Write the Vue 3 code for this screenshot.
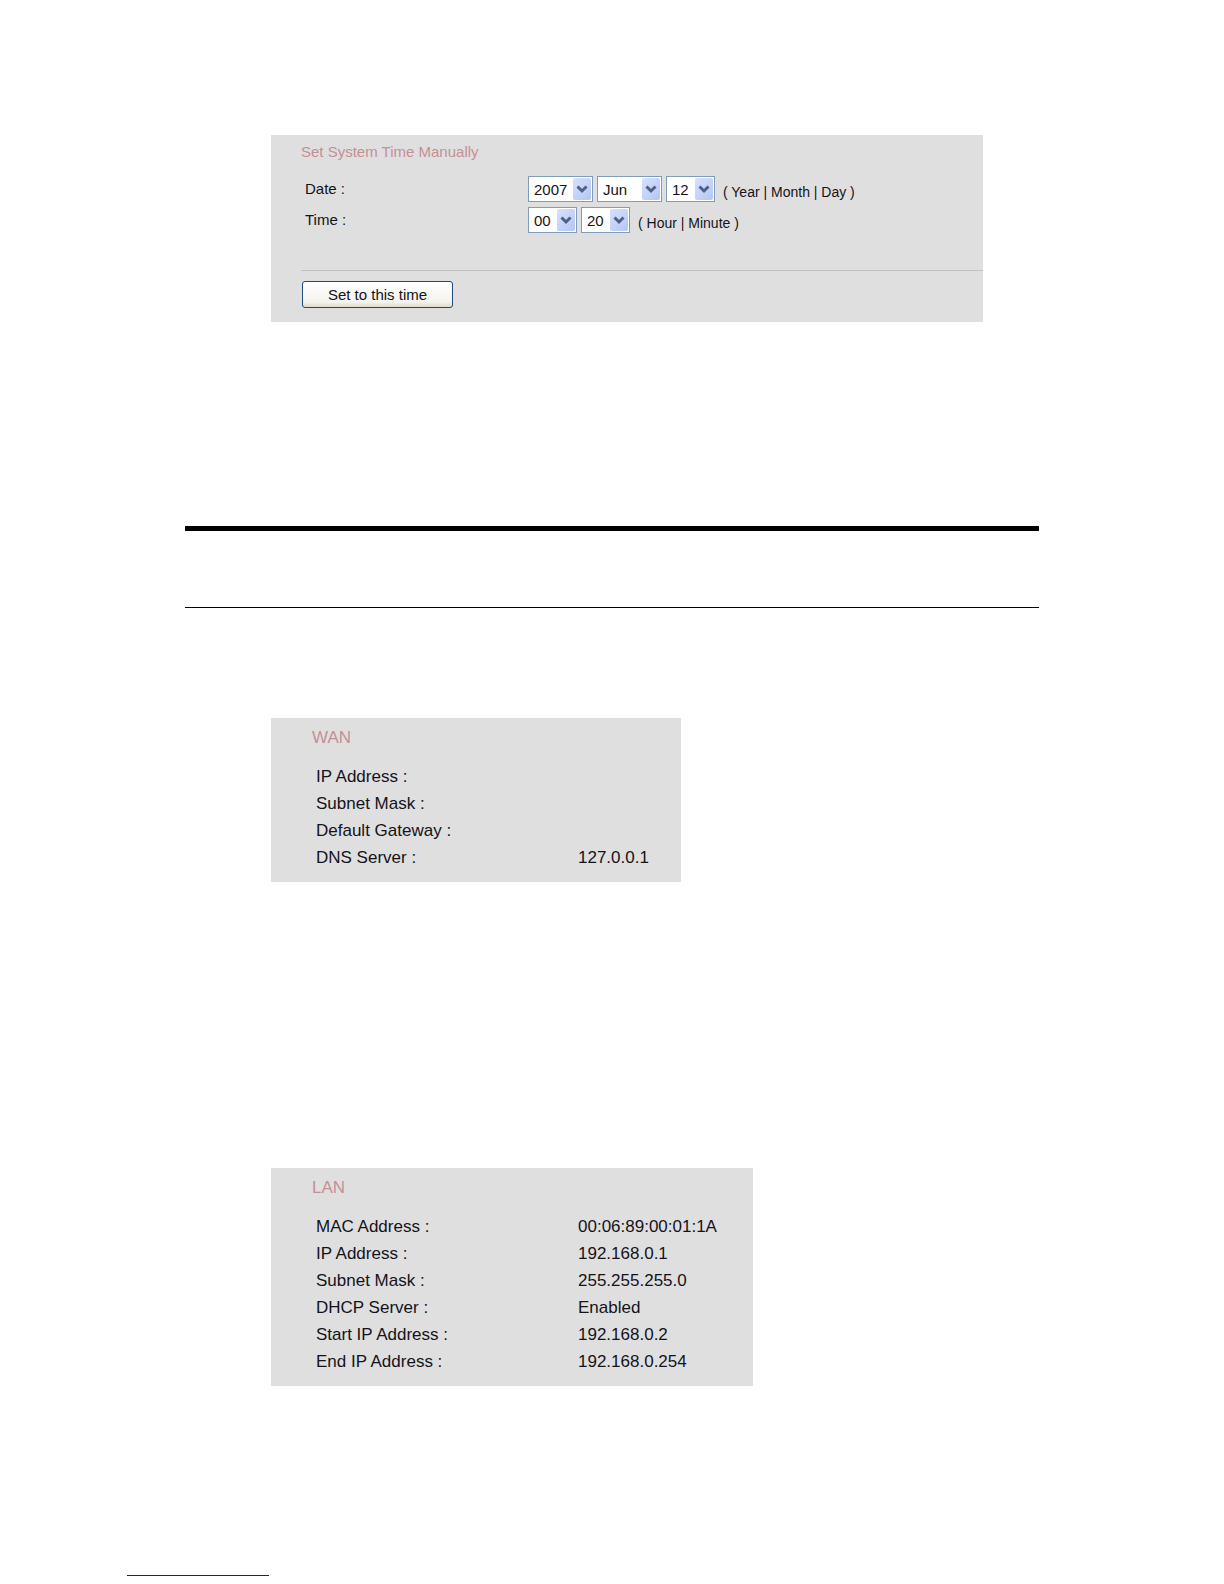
<template>
  <div class="page">
    <main class="content">
      <!-- manual system time -->
      <form class="panel time-panel" @submit.prevent="setTime">
        <h2 class="time-title">Set System Time Manually</h2>
        <div v-for="row in timeRows" :key="row.label" class="time-row">
          <label class="time-label" :for="row.fields[0].id">{{ row.label }}</label>
          <div class="time-fields">
            <span v-for="field in row.fields" :key="field.id" class="select-box" :class="field.size">
              <select :id="field.id" v-model="form[field.id]" :aria-label="field.name">
                <option v-for="option in field.options" :key="option" :value="option">{{ option }}</option>
              </select>
              <span class="select-arrow">
                <svg viewBox="0 0 18 22" aria-hidden="true">
                  <path d="M4.5 8.5 L9 13 L13.5 8.5" fill="none" stroke="#4d6185" stroke-width="3" />
                </svg>
              </span>
            </span>
            <span class="hint">{{ row.hint }}</span>
          </div>
        </div>
        <div class="actions">
          <button type="submit" class="set-btn">Set to this time</button>
        </div>
      </form>

      <div class="section-head"></div>

      <!-- WAN / LAN status -->
      <section v-for="group in status" :key="group.title" class="panel status-panel" :class="group.size">
        <h2 class="status-title">{{ group.title }}</h2>
        <table class="status-table">
          <tbody>
            <tr v-for="item in group.items" :key="item.label">
              <th scope="row">{{ item.label }}</th>
              <td>{{ item.value }}</td>
            </tr>
          </tbody>
        </table>
      </section>
    </main>

    <footer class="footer">
      <div class="footer-line"></div>
    </footer>
  </div>
</template>

<script setup>
import { reactive } from 'vue'

const months = ['Jan', 'Feb', 'Mar', 'Apr', 'May', 'Jun', 'Jul', 'Aug', 'Sep', 'Oct', 'Nov', 'Dec']

const range = (from, to) => {
  const list = []
  for (let i = from; i <= to; i++) {
    list.push(String(i).padStart(2, '0'))
  }
  return list
}

const form = reactive({
  year: '2007',
  month: 'Jun',
  day: '12',
  hour: '00',
  minute: '20'
})

const timeRows = [
  {
    label: 'Date :',
    hint: '( Year | Month | Day )',
    fields: [
      { id: 'year', name: 'Year', size: 'wide', options: range(2000, 2020) },
      { id: 'month', name: 'Month', size: 'wide', options: months },
      { id: 'day', name: 'Day', size: 'narrow', options: range(1, 31) }
    ]
  },
  {
    label: 'Time :',
    hint: '( Hour | Minute )',
    fields: [
      { id: 'hour', name: 'Hour', size: 'narrow', options: range(0, 23) },
      { id: 'minute', name: 'Minute', size: 'narrow', options: range(0, 59) }
    ]
  }
]

const status = [
  {
    title: 'WAN',
    size: 'wan',
    items: [
      { label: 'IP Address :', value: '' },
      { label: 'Subnet Mask :', value: '' },
      { label: 'Default Gateway :', value: '' },
      { label: 'DNS Server :', value: '127.0.0.1' }
    ]
  },
  {
    title: 'LAN',
    size: 'lan',
    items: [
      { label: 'MAC Address :', value: '00:06:89:00:01:1A' },
      { label: 'IP Address :', value: '192.168.0.1' },
      { label: 'Subnet Mask :', value: '255.255.255.0' },
      { label: 'DHCP Server :', value: 'Enabled' },
      { label: 'Start IP Address :', value: '192.168.0.2' },
      { label: 'End IP Address :', value: '192.168.0.254' }
    ]
  }
]

const setTime = () => {
  console.log('set time', { ...form })
}
</script>

<style>
body {
  margin: 0;
  background: #ffffff;
}
</style>

<style scoped>
.page {
  font-family: "Liberation Sans", Arial, sans-serif;
  color: #15131a;
  padding-top: 135px;
}

.content {
  max-width: 854px;
  margin: 0 auto;
}

.panel {
  box-sizing: border-box;
  margin-left: 86px;
  background: #dfdfdf;
}

h2 {
  margin: 0;
  font-weight: normal;
  color: #c68f95;
}

/* 時間設定 */
.time-panel {
  max-width: 712px;
  padding: 7px 0 14px 30px;
}

.time-title {
  font-size: 15px;
  line-height: 20px;
  margin-bottom: 14px;
}

.time-row {
  display: flex;
  align-items: center;
  margin-bottom: 5px;
  padding-left: 4px;
}

.time-label {
  width: 223px;
  font-size: 15px;
  line-height: 26px;
}

.time-fields {
  display: flex;
  gap: 4px;
}

.select-box {
  position: relative;
  box-sizing: border-box;
  height: 26px;
  border: 1px solid #7f9db9;
  background: #ffffff;
}

.select-box.wide {
  width: 65px;
}

.select-box.narrow {
  width: 49px;
}

select {
  appearance: none;
  width: 100%;
  height: 100%;
  margin: 0;
  padding: 0 0 0 5px;
  border: none;
  background: transparent;
  color: #15131a;
  font-family: inherit;
  font-size: 15px;
}

.select-arrow {
  position: absolute;
  top: 1px;
  right: 1px;
  bottom: 1px;
  width: 18px;
  border-radius: 2px;
  background: linear-gradient(135deg, #d6e1fd, #b3c6f5);
  pointer-events: none;
}

.select-arrow svg {
  display: block;
  width: 100%;
  height: 100%;
}

.hint {
  padding: 6px 0 0 4px;
  font-size: 14px;
  line-height: 20px;
}

.actions {
  margin-top: 37px;
  padding: 10px 0 0 1px;
  border-top: 1px solid #c0c0c0;
}

.set-btn {
  display: block;
  width: 151px;
  height: 27px;
  padding: 0;
  border: 1px solid #1d4c7c;
  border-radius: 3px;
  background: linear-gradient(#ffffff, #f4f3ee 80%, #dedacb);
  color: #15131a;
  font-family: inherit;
  font-size: 15px;
  cursor: pointer;
}

/* 章節分隔線 */
.section-head {
  height: 76px;
  margin-top: 204px;
  border-top: 5px solid #000000;
  border-bottom: 1px solid #000000;
}

/* WAN / LAN 狀態 */
.status-panel {
  padding: 9px 0 11px 41px;
}

.status-panel.wan {
  max-width: 410px;
  margin-top: 110px;
}

.status-panel.lan {
  max-width: 482px;
  margin-top: 286px;
}

.status-title {
  font-size: 17px;
  line-height: 22px;
  margin-bottom: 14px;
}

.status-table {
  width: 100%;
  padding-left: 4px;
  border-spacing: 0;
  table-layout: fixed;
}

.status-table th,
.status-table td {
  height: 27px;
  padding: 0;
  font-size: 17px;
  line-height: 27px;
  font-weight: normal;
  text-align: left;
}

.status-table th {
  width: 262px;
}

/* 頁尾 */
.footer {
  padding: 189px 127px 8px;
}

.footer-line {
  max-width: 142px;
  height: 1px;
  background: #1b1b7c;
}
</style>
